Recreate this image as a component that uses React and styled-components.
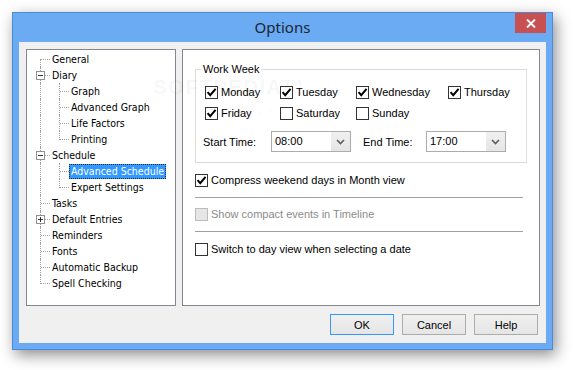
import React from 'react';
import styled, { createGlobalStyle, css } from 'styled-components';

const Global = createGlobalStyle`
  html, body { margin: 0; padding: 0; background: #fff; }
  #root { width: 573px; height: 370px; }
`;

const Stage = styled.div`
  width: 573px;
  height: 370px;
  box-sizing: border-box;
  padding: 12px 0 0 12px;
  background: #fff;
  overflow: hidden;
`;

const Window = styled.div`
  width: 541px;
  height: 338px;
  box-sizing: border-box;
  border: 1px solid #4a8ad6;
  background: #6aabf3;
  padding: 0 6px 6px;
  display: flex;
  flex-direction: column;
  box-shadow: 3px 5px 14px rgba(0, 0, 0, 0.45);
`;

const TitleBar = styled.div`
  height: 29px;
  flex: none;
  display: grid;
  grid-template-columns: 1fr auto 1fr;
  align-items: center;
`;

const Title = styled.div`
  grid-column: 2;
  font-family: "Noto Sans", "Open Sans", sans-serif;
  font-size: 15px;
  line-height: 20px;
  color: #1c2633;
  margin-top: -1px;
`;

const CloseButton = styled.div`
  grid-column: 3;
  justify-self: end;
  align-self: start;
  width: 31px;
  height: 20px;
  background: #c75050;
  display: flex;
  align-items: center;
  justify-content: center;
`;

const Client = styled.div`
  flex: 1;
  position: relative;
  background: #f0f0f0;
  padding: 7px;
  display: flex;
  flex-direction: column;
  gap: 8px;
  font-family: "Liberation Sans", Arial, sans-serif;
  font-size: 11px;
  color: #000;
`;

const MainRow = styled.div`
  display: flex;
  gap: 6px;
  height: 257px;
  flex: none;
`;

const Tree = styled.div`
  width: 150px;
  flex: none;
  box-sizing: border-box;
  border: 1px solid #828790;
  background: #fff;
  padding: 1px 0 0 4px;
  font-family: "DejaVu Sans Condensed", "DejaVu Sans", sans-serif;
  font-size: 10.5px;
  overflow: hidden;
`;

const TreeRow = styled.div`
  display: flex;
  height: 16px;
  align-items: center;
`;

const dots = '1px dotted #a0a0a0';

const LineCell = styled.span`
  position: relative;
  flex: none;
  width: 19px;
  height: 16px;
  &::before {
    content: '';
    position: absolute;
    left: 9px;
    border-left: ${dots};
    display: ${(p) => (p.$v === 'none' ? 'none' : 'block')};
    top: ${(p) => (p.$v === 'bottom' ? '8px' : '0')};
    height: ${(p) => (p.$v === 'top' ? '9px' : p.$v === 'bottom' ? '8px' : '16px')};
  }
  &::after {
    content: '';
    position: absolute;
    left: 10px;
    right: 0;
    top: 8px;
    border-top: ${dots};
    display: ${(p) => (p.$h ? 'block' : 'none')};
  }
`;

const Expander = styled.span`
  position: absolute;
  left: 5px;
  top: 4px;
  width: 9px;
  height: 9px;
  box-sizing: border-box;
  border: 1px solid #919191;
  background: #fff;
  z-index: 1;
  &::before {
    content: '';
    position: absolute;
    left: 1px;
    right: 1px;
    top: 3px;
    height: 1px;
    background: #333;
  }
  &::after {
    content: '';
    position: absolute;
    top: 1px;
    bottom: 1px;
    left: 3px;
    width: 1px;
    background: #333;
    display: ${(p) => (p.$plus ? 'block' : 'none')};
  }
`;

const TreeLabel = styled.span`
  border: 1px solid transparent;
  padding: 0 1px;
  line-height: 13px;
  white-space: nowrap;
  ${(p) =>
    p.$selected &&
    css`
      background: #3399ff;
      color: #fff;
      border: 1px dotted #1b2d44;
    `}
`;

const Panel = styled.div`
  flex: 1;
  box-sizing: border-box;
  border: 1px solid #828790;
  background: #fff;
  padding: 13px 12px 0;
`;

const GroupBox = styled.fieldset`
  margin: 0;
  padding: 0;
  width: 332px;
  box-sizing: border-box;
  min-width: 0;
  border: 1px solid #dcdcdc;
`;

const Legend = styled.legend`
  padding: 0 2px;
  margin-left: 5px;
  line-height: 13px;
`;

const GroupBody = styled.div`
  padding: 8px 0 10px 7px;
`;

const DayGrid = styled.div`
  display: grid;
  grid-template-columns: 75px 76px 92px auto;
  grid-auto-rows: 16px;
  row-gap: 5px;
  padding-left: 2px;
`;

const CheckItem = styled.label`
  display: flex;
  align-items: center;
  gap: 3px;
  height: 16px;
  white-space: nowrap;
  color: ${(p) => (p.$disabled ? '#8b8b8b' : '#000')};
  margin-top: ${(p) => p.$mt || 0}px;
`;

const Box = styled.span`
  width: 13px;
  height: 13px;
  flex: none;
  box-sizing: border-box;
  border: 1px solid ${(p) => (p.$disabled ? '#bcbcbc' : '#333')};
  background: ${(p) => (p.$disabled ? '#e6e6e6' : '#fff')};
  display: flex;
  align-items: center;
  justify-content: center;
`;

const TimeRow = styled.div`
  display: flex;
  align-items: center;
  margin-top: 10px;
  height: 21px;
`;

const TimeLabel = styled.span`
  width: ${(p) => p.$w}px;
  margin-left: ${(p) => p.$ml || 0}px;
  flex: none;
`;

const Combo = styled.div`
  width: 80px;
  height: 21px;
  box-sizing: border-box;
  border: 1px solid #acacac;
  background: #fff;
  display: flex;
  flex: none;
`;

const ComboValue = styled.span`
  flex: 1;
  padding-left: 3px;
  line-height: 19px;
`;

const ComboButton = styled.span`
  width: 19px;
  background: linear-gradient(#f0f0f0, #e5e5e5);
  display: flex;
  align-items: center;
  justify-content: center;
`;

const Separator = styled.div`
  width: 328px;
  height: 1px;
  background: #a0a0a0;
  margin-top: ${(p) => p.$mt}px;
`;

const ButtonRow = styled.div`
  display: flex;
  justify-content: flex-end;
  gap: 8px;
  padding-right: 1px;
`;

const Button = styled.div`
  width: 64px;
  height: 21px;
  box-sizing: border-box;
  border: 1px solid ${(p) => (p.$default ? '#3399ff' : '#acacac')};
  background: linear-gradient(#f0f0f0, #e5e5e5);
  display: flex;
  align-items: center;
  justify-content: center;
`;

const Watermark = styled.div`
  position: absolute;
  left: 134px;
  top: 33px;
  pointer-events: none;
  color: rgba(0, 0, 0, 0.045);
  font-family: "Liberation Sans", Arial, sans-serif;
  font-weight: bold;
  font-size: 21px;
  line-height: 24px;
  letter-spacing: 1px;
`;

const WatermarkSmall = styled.div`
  font-size: 9px;
  line-height: 12px;
  font-weight: normal;
  letter-spacing: 2px;
  margin: 6px 0 0 38px;
`;

const Check = () => (
  <svg width="11" height="11" viewBox="0 0 11 11">
    <path d="M1.6 5.2 L4.2 8.2 L9.6 1.8" fill="none" stroke="#000" strokeWidth="2" />
  </svg>
);

const CheckBox = ({ checked, disabled, label, mt }) => (
  <CheckItem $disabled={disabled} $mt={mt}>
    <Box $disabled={disabled}>{checked && <Check />}</Box>
    {label}
  </CheckItem>
);

const Chevron = () => (
  <svg width="9" height="6" viewBox="0 0 9 6">
    <path d="M1 1 L4.5 4.5 L8 1" fill="none" stroke="#606060" strokeWidth="1.7" />
  </svg>
);

const CloseX = () => (
  <svg width="10" height="9" viewBox="0 0 10 9">
    <path d="M1 0.5 L9 8.5 M9 0.5 L1 8.5" stroke="#fff" strokeWidth="1.9" />
  </svg>
);

const treeItems = [
  { label: 'General', cells: ['first'] },
  { label: 'Diary', cells: ['tee'], exp: 'minus' },
  { label: 'Graph', cells: ['pipe', 'tee'] },
  { label: 'Advanced Graph', cells: ['pipe', 'tee'] },
  { label: 'Life Factors', cells: ['pipe', 'tee'] },
  { label: 'Printing', cells: ['pipe', 'last'] },
  { label: 'Schedule', cells: ['tee'], exp: 'minus' },
  { label: 'Advanced Schedule', cells: ['pipe', 'tee'], selected: true },
  { label: 'Expert Settings', cells: ['pipe', 'last'] },
  { label: 'Tasks', cells: ['tee'] },
  { label: 'Default Entries', cells: ['tee'], exp: 'plus' },
  { label: 'Reminders', cells: ['tee'] },
  { label: 'Fonts', cells: ['tee'] },
  { label: 'Automatic Backup', cells: ['tee'] },
  { label: 'Spell Checking', cells: ['last'] },
];

const cellProps = {
  first: { $v: 'bottom', $h: true },
  tee: { $v: 'full', $h: true },
  pipe: { $v: 'full', $h: false },
  last: { $v: 'top', $h: true },
};

const days = [
  ['Monday', true],
  ['Tuesday', true],
  ['Wednesday', true],
  ['Thursday', true],
  ['Friday', true],
  ['Saturday', false],
  ['Sunday', false],
];

export default function App() {
  return (
    <Stage>
      <Global />
      <Window>
        <TitleBar>
          <Title>Options</Title>
          <CloseButton>
            <CloseX />
          </CloseButton>
        </TitleBar>
        <Client>
          <MainRow>
            <Tree>
              {treeItems.map((it) => (
                <TreeRow key={it.label}>
                  {it.cells.map((c, i) => (
                    <LineCell key={i} {...cellProps[c]}>
                      {it.exp && i === it.cells.length - 1 && <Expander $plus={it.exp === 'plus'} />}
                    </LineCell>
                  ))}
                  <TreeLabel $selected={it.selected}>{it.label}</TreeLabel>
                </TreeRow>
              ))}
            </Tree>
            <Panel>
              <GroupBox>
                <Legend>Work Week</Legend>
                <GroupBody>
                  <DayGrid>
                    {days.map(([d, c]) => (
                      <CheckBox key={d} label={d} checked={c} />
                    ))}
                  </DayGrid>
                  <TimeRow>
                    <TimeLabel $w={68}>Start Time:</TimeLabel>
                    <Combo>
                      <ComboValue>08:00</ComboValue>
                      <ComboButton>
                        <Chevron />
                      </ComboButton>
                    </Combo>
                    <TimeLabel $w={63} $ml={12}>End Time:</TimeLabel>
                    <Combo>
                      <ComboValue>17:00</ComboValue>
                      <ComboButton>
                        <Chevron />
                      </ComboButton>
                    </Combo>
                  </TimeRow>
                </GroupBody>
              </GroupBox>
              <CheckBox mt={9} checked label="Compress weekend days in Month view" />
              <Separator $mt={9} />
              <CheckBox mt={8} disabled label="Show compact events in Timeline" />
              <Separator $mt={9} />
              <CheckBox mt={9} label="Switch to day view when selecting a date" />
            </Panel>
          </MainRow>
          <ButtonRow>
            <Button $default>OK</Button>
            <Button>Cancel</Button>
            <Button>Help</Button>
          </ButtonRow>
          <Watermark>
            SOFTPEDIA™
            <WatermarkSmall>www.softpedia.com</WatermarkSmall>
          </Watermark>
        </Client>
      </Window>
    </Stage>
  );
}
